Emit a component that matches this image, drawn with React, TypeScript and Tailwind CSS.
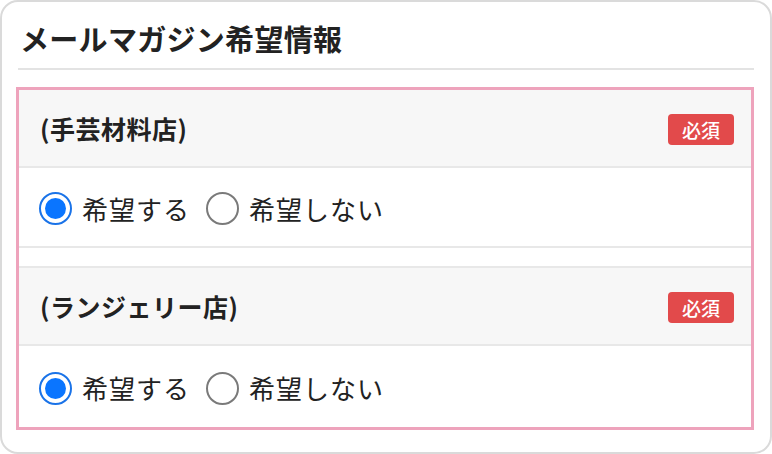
import React, { useState } from 'react';

type Choice = 'yes' | 'no';

const shops = [
  { id: 'craft', label: '(手芸材料店)' },
  { id: 'lingerie', label: '(ランジェリー店)' },
];

const font = { fontFamily: '"Noto Sans CJK JP", "Noto Sans", sans-serif' };

function Radio({ checked, onClick, label }: { checked: boolean; onClick: () => void; label: string }) {
  return (
    <label className="flex items-center gap-[10px] cursor-pointer" onClick={onClick}>
      <span
        className={`flex items-center justify-center w-[33px] h-[33px] rounded-full border-2 bg-white ${checked ? 'border-[#1a73e8]' : 'border-[#7a7a7a]'}`}
      >
        {checked && <span className="w-[21px] h-[21px] rounded-full bg-[#0a75ff]" />}
      </span>
      <span className="text-[26px] leading-none text-[#222] tracking-[1px]">{label}</span>
    </label>
  );
}

export default function App() {
  const [values, setValues] = useState<Record<string, Choice>>({ craft: 'yes', lingerie: 'yes' });

  return (
    <div className="w-[772px] h-[454px] bg-white" style={font}>
      <div className="h-full border-2 border-[#dadada] rounded-[18px] px-[14px] pt-[22px] pb-[18px]">
        <h2 className="text-[29px] font-bold text-[#222] leading-none pl-[2px] pb-[15px] border-b-2 border-[#e3e3e3] mx-[2px] tracking-[0.3px]">
          メールマガジン希望情報
        </h2>

        <div className="mt-[17px] mr-[2px] border-[3px] border-[#eea3bc]">
          {shops.map((s, i) => (
            <div key={s.id} className={i > 0 ? 'mt-[18px] border-t-2 border-[#e8e8e8]' : ''}>
              <div className="h-[78px] bg-[#f7f7f7] border-b-2 border-[#e8e8e8] flex items-center justify-between pl-[21px] pr-[17px] pt-[2px]">
                <span className="text-[25px] font-bold text-[#222] tracking-[0.5px]">{s.label}</span>
                <span className="bg-[#e24a4b] text-white text-[19px] font-medium leading-none rounded-[4px] w-[66px] h-[31px] flex items-center justify-center">
                  必須
                </span>
              </div>
              <div
                className={`flex items-center gap-[16px] pl-[20px] pt-[3px] ${i === 0 ? 'h-[80px] border-b-2 border-[#e8e8e8]' : 'h-[81px]'}`}
              >
                <Radio
                  checked={values[s.id] === 'yes'}
                  onClick={() => setValues({ ...values, [s.id]: 'yes' })}
                  label="希望する"
                />
                <Radio
                  checked={values[s.id] === 'no'}
                  onClick={() => setValues({ ...values, [s.id]: 'no' })}
                  label="希望しない"
                />
              </div>
            </div>
          ))}
        </div>
      </div>
    </div>
  );
}
